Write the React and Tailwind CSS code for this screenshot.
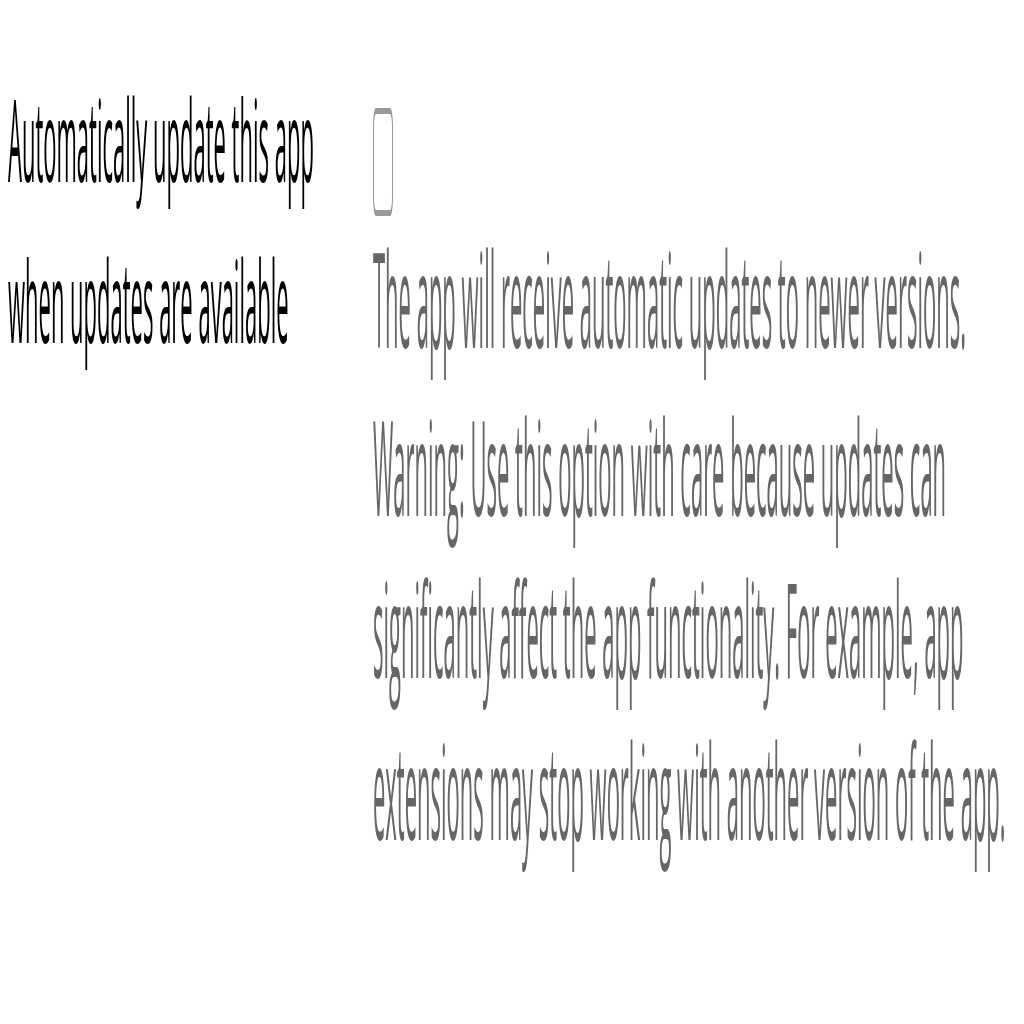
export default function App() {
  return (
    <div className="min-h-screen w-full bg-white flex font-['Open_Sans',sans-serif] overflow-hidden">
      <div className="w-[373px] shrink-0 pl-[8px] origin-top-left scale-y-[5.2]">
        <div className="pt-[11.25px] text-[22px] leading-[30.8px] text-black whitespace-nowrap">
          <div>Automatically update this app</div>
          <div>when updates are available</div>
        </div>
      </div>
      <div className="origin-top-left scale-y-[6]">
        <div className="pt-[18px]">
          <div className="w-[20px] h-[18.3px] border border-[#9a9a9a] rounded-[3px] bg-white"></div>
        </div>
        <div className="text-[22px] leading-[27.33px] text-[#666666] whitespace-nowrap">
          <div>The app will receive automatic updates to newer versions.</div>
          <div>Warning: Use this option with care because updates can</div>
          <div>significantly affect the app functionality. For example, app</div>
          <div>extensions may stop working with another version of the app.</div>
        </div>
      </div>
    </div>
  );
}
